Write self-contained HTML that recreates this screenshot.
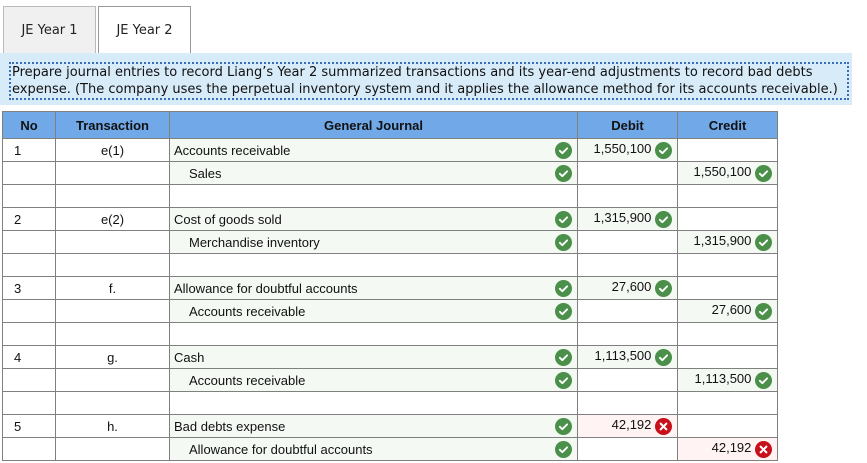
<!DOCTYPE html>
<html><head><meta charset="utf-8"><style>
body{margin:0;width:867px;height:463px;background:#fff;font-family:"Liberation Sans",Arial,sans-serif;position:relative;overflow:hidden}
.tab{position:absolute;top:6px;height:47px;width:91px;border:1px solid #bbb;border-bottom:none;font-family:"DejaVu Sans",sans-serif;font-size:13px;line-height:47px;text-align:center;color:#222}
.banner{position:absolute;left:0;top:53px;width:852px;height:52px;background:#d8ebf8}
.box{position:absolute;left:9px;top:62px;width:835px;height:34px;border:2px dotted #3a6fb5;font-family:"DejaVu Sans",sans-serif;font-size:13px;line-height:17px;color:#111;padding-left:1px;white-space:nowrap;overflow:hidden}
table{position:absolute;left:2px;top:111px;border-collapse:collapse;font-size:13px;color:#111}
td,th{border:1px solid #808080;height:23px;padding:0;box-sizing:border-box}
th{background:#70a8e8;height:27px;font-weight:bold;font-size:13px}
.c{text-align:center}
.g{background:#f4f9f4}
.r{background:#fff3f3}
.ic{display:inline-block;width:17px;height:17px;vertical-align:middle;position:relative;top:0px}
.num{text-align:right;padding-right:5px}
.gj{position:relative;padding-left:4px}
.gj .ic{position:absolute;right:5px;top:3px}
</style></head><body>
<div class="tab" style="left:3px;background:#f0f0f0">JE Year 1</div>
<div class="tab" style="left:98px;background:#fff;border-color:#999">JE Year 2</div>
<div class="banner"></div>
<div class="box">Prepare journal entries to record Liang’s Year 2 summarized transactions and its year-end adjustments to record bad debts<br>expense. (The company uses the perpetual inventory system and it applies the allowance method for its accounts receivable.)</div>
<svg width="0" height="0" style="position:absolute"><defs>
<symbol id="k" viewBox="0 0 16 16"><circle cx="8" cy="8" r="8" fill="#4a8f4a"/><path d="M4.6 8.3l2.3 2.2 4.5-4.5" stroke="#fff" stroke-width="1.8" fill="none" stroke-linecap="round" stroke-linejoin="round"/></symbol>
<symbol id="x" viewBox="0 0 16 16"><circle cx="8" cy="8" r="8" fill="#c8101a"/><path d="M5.3 5.3l5.4 5.4M10.7 5.3l-5.4 5.4" stroke="#fff" stroke-width="1.9" stroke-linecap="round"/></symbol>
</defs></svg>
<table>
<colgroup><col style="width:53px"><col style="width:114px"><col style="width:408px"><col style="width:100px"><col style="width:100px"></colgroup>
<tr><th>No</th><th>Transaction</th><th>General Journal</th><th>Debit</th><th>Credit</th></tr>

<tr><td style="padding-left:11px">1</td><td class="c">e(1)</td><td class="gj g">Accounts receivable<svg class="ic" viewBox="0 0 16 16"><use href="#k"/></svg></td><td class="num g">1,550,100 <svg class="ic" viewBox="0 0 16 16"><use href="#k"/></svg></td><td></td></tr>
<tr><td></td><td></td><td class="gj g" style="padding-left:19px">Sales<svg class="ic" viewBox="0 0 16 16"><use href="#k"/></svg></td><td></td><td class="num g">1,550,100 <svg class="ic" viewBox="0 0 16 16"><use href="#k"/></svg></td></tr>
<tr><td></td><td></td><td></td><td></td><td></td></tr>

<tr><td style="padding-left:11px">2</td><td class="c">e(2)</td><td class="gj g">Cost of goods sold<svg class="ic" viewBox="0 0 16 16"><use href="#k"/></svg></td><td class="num g">1,315,900 <svg class="ic" viewBox="0 0 16 16"><use href="#k"/></svg></td><td></td></tr>
<tr><td></td><td></td><td class="gj g" style="padding-left:19px">Merchandise inventory<svg class="ic" viewBox="0 0 16 16"><use href="#k"/></svg></td><td></td><td class="num g">1,315,900 <svg class="ic" viewBox="0 0 16 16"><use href="#k"/></svg></td></tr>
<tr><td></td><td></td><td></td><td></td><td></td></tr>

<tr><td style="padding-left:11px">3</td><td class="c">f.</td><td class="gj g">Allowance for doubtful accounts<svg class="ic" viewBox="0 0 16 16"><use href="#k"/></svg></td><td class="num g">27,600 <svg class="ic" viewBox="0 0 16 16"><use href="#k"/></svg></td><td></td></tr>
<tr><td></td><td></td><td class="gj g" style="padding-left:19px">Accounts receivable<svg class="ic" viewBox="0 0 16 16"><use href="#k"/></svg></td><td></td><td class="num g">27,600 <svg class="ic" viewBox="0 0 16 16"><use href="#k"/></svg></td></tr>
<tr><td></td><td></td><td></td><td></td><td></td></tr>

<tr><td style="padding-left:11px">4</td><td class="c">g.</td><td class="gj g">Cash<svg class="ic" viewBox="0 0 16 16"><use href="#k"/></svg></td><td class="num g">1,113,500 <svg class="ic" viewBox="0 0 16 16"><use href="#k"/></svg></td><td></td></tr>
<tr><td></td><td></td><td class="gj g" style="padding-left:19px">Accounts receivable<svg class="ic" viewBox="0 0 16 16"><use href="#k"/></svg></td><td></td><td class="num g">1,113,500 <svg class="ic" viewBox="0 0 16 16"><use href="#k"/></svg></td></tr>
<tr><td></td><td></td><td></td><td></td><td></td></tr>

<tr><td style="padding-left:11px">5</td><td class="c">h.</td><td class="gj g">Bad debts expense<svg class="ic" viewBox="0 0 16 16"><use href="#k"/></svg></td><td class="num r">42,192 <svg class="ic" viewBox="0 0 16 16"><use href="#x"/></svg></td><td></td></tr>
<tr><td></td><td></td><td class="gj g" style="padding-left:19px">Allowance for doubtful accounts<svg class="ic" viewBox="0 0 16 16"><use href="#k"/></svg></td><td></td><td class="num r">42,192 <svg class="ic" viewBox="0 0 16 16"><use href="#x"/></svg></td></tr>
</table>
</body></html>
